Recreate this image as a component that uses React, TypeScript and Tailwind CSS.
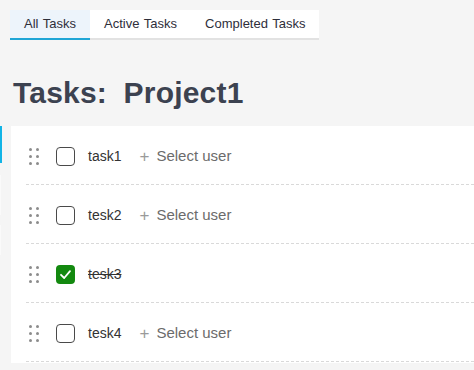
import React from "react";

type Task = { id: number; name: string; done: boolean };

const tasks: Task[] = [
  { id: 1, name: "task1", done: false },
  { id: 2, name: "tesk2", done: false },
  { id: 3, name: "tesk3", done: true },
  { id: 4, name: "tesk4", done: false },
];

const tabs = ["All Tasks", "Active Tasks", "Completed Tasks"];

function DragHandle() {
  return (
    <div className="grid grid-cols-2 gap-x-[4px] gap-y-[4px] w-[10px]">
      {Array.from({ length: 6 }).map((_, i) => (
        <span key={i} className="block w-[3px] h-[3px] rounded-full bg-[#8c8c8c]" />
      ))}
    </div>
  );
}

function Checkbox({ checked }: { checked: boolean }) {
  if (checked) {
    return (
      <div className="w-[19px] h-[19px] rounded-[4px] bg-[#13890f] flex items-center justify-center">
        <svg width="13" height="13" viewBox="0 0 13 13" fill="none">
          <path d="M2 6.8 L5.2 10 L11 3.2" stroke="white" strokeWidth="1.8" strokeLinecap="round" strokeLinejoin="round" />
        </svg>
      </div>
    );
  }
  return <div className="w-[19px] h-[19px] rounded-[4px] border-[1.5px] border-[#4a4a4a] bg-white" />;
}

export default function App() {
  return (
    <div className="relative w-[474px] h-[370px] bg-[#f5f5f5] overflow-hidden font-['Liberation_Sans',Arial,sans-serif]">
      {/* edge of the sidebar peeking in */}
      <div className="absolute left-0 top-[126px] w-[2px] h-[37px] bg-[#12b4e6]" />
      <div className="absolute left-0 top-[175px] w-[1px] h-[40px] bg-[#fafafa]" />
      <div className="absolute left-0 top-[225px] w-[1px] h-[30px] bg-[#fafafa]" />

      <div className="pl-[10px] pt-[10px]">
        <div className="flex w-[309px] bg-white border-b-2 border-[#e2e2e2] h-[30px] whitespace-nowrap">
          {tabs.map((t, i) => (
            <div
              key={t}
              className={
                i === 0
                  ? "shrink-0 px-[14px] h-[30px] -mb-[2px] flex items-center text-[13px] [word-spacing:1px] text-[#2e2e3a] bg-[#edf4fb] border-b-2 border-[#1ea5d6]"
                  : "shrink-0 px-[14px] h-[28px] flex items-center text-[13px] [word-spacing:1px] text-[#2e2e3a]"
              }
            >
              {t}
            </div>
          ))}
        </div>
      </div>

      <h1 className="ml-[13px] mt-[35px] text-[30px] leading-[36px] font-bold text-[#3c4250] tracking-[0.2px] [word-spacing:8px]">
        Tasks: Project1
      </h1>

      <div className="ml-[11px] mt-[15px] bg-white pl-[15px] pb-[1px]">
        {tasks.map((task) => (
          <div
            key={task.id}
            className="h-[59px] border-b border-dashed border-[#d9d9d9] flex items-center pl-[3px] pt-[2px]"
          >
            <DragHandle />
            <div className="ml-[17px]">
              <Checkbox checked={task.done} />
            </div>
            <span
              className={
                task.done
                  ? "ml-[13px] text-[14px] text-[#333] line-through"
                  : "ml-[13px] text-[14px] text-[#333]"
              }
            >
              {task.name}
            </span>
            {!task.done && (
              <span className="ml-[18px] flex items-center text-[15px] text-[#6b6b6b]">
                <span className="text-[17px] text-[#9a9a9a] mr-[7px] leading-none">+</span>
                Select user
              </span>
            )}
          </div>
        ))}
      </div>
    </div>
  );
}
